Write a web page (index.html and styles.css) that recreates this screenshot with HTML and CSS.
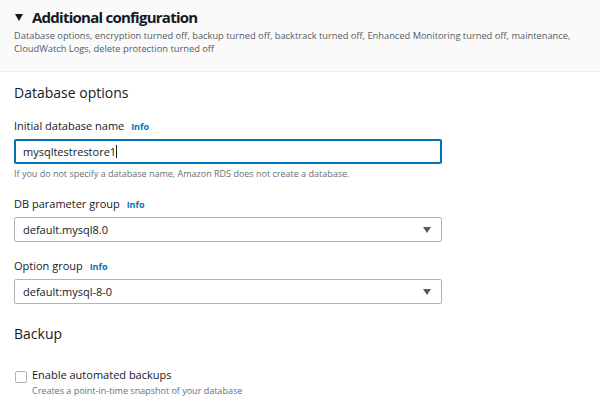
FILE: index.html
```html
<!DOCTYPE html>
<html lang="en">
  <head>
    <meta charset="UTF-8" />
    <meta name="viewport" content="width=device-width, initial-scale=1.0" />
    <title>Additional configuration</title>
    <link rel="stylesheet" href="styles.css">
  </head>
  <body>
    <div class="expander">
      <h1 class="expander-title"><span class="caret"></span>Additional configuration</h1>
      <p class="expander-desc">
        Database options, encryption turned off, backup turned off, backtrack turned off, Enhanced Monitoring turned off, maintenance, CloudWatch Logs, delete protection turned off
      </p>
    </div>

    <div class="section">
      <h2>Database options</h2>

      <div class="field">
        <label class="label">Initial database name <a href="#" class="info">Info</a></label>
        <div class="input focused">mysqltestrestore1<span class="cursor"></span></div>
        <p class="hint">If you do not specify a database name, Amazon RDS does not create a database.</p>
      </div>

      <div class="field">
        <label class="label">DB parameter group <a href="#" class="info">Info</a></label>
        <div class="input select">default.mysql8.0<span class="arrow"></span></div>
      </div>

      <div class="field">
        <label class="label">Option group <a href="#" class="info">Info</a></label>
        <div class="input select">default:mysql-8-0<span class="arrow"></span></div>
      </div>

      <h2 class="backup">Backup</h2>

      <div class="check">
        <span class="box"></span>
        <div>
          <div class="check-label">Enable automated backups</div>
          <p class="hint">Creates a point-in-time snapshot of your database</p>
        </div>
      </div>
    </div>
  </body>
</html>
```

FILE: styles.css
```css
body {
  margin: 0;
  font-family: "Open Sans", "Noto Sans", sans-serif;
  color: #16191f;
  background-color: white;
}
.expander {
  background-color: #fafafa;
  border-bottom: 1px solid #eaeded;
  padding: 7px 14px 0;
  height: 64px;
}
.expander-title {
  margin: 0;
  font-size: 15px;
  font-weight: bold;
  letter-spacing: -0.75px;
  display: flex;
  align-items: center;
  line-height: 20px;
}
.caret {
  width: 0;
  height: 0;
  border-left: 4px solid transparent;
  border-right: 4px solid transparent;
  border-top: 7px solid #16191f;
  margin: 0 9px 0 1px;
}
.expander-desc {
  margin: 2px 0 0;
  font-size: 9.3px;
  line-height: 13px;
  color: #545b64;
  max-width: 565px;
}
.section {
  padding: 0 14px;
}
h2 {
  margin: 11px 0 0;
  font-size: 14px;
  font-weight: normal;
  line-height: 20px;
}
.field {
  margin-top: 15px;
}
.field + .field {
  margin-top: 16px;
}
.label {
  display: block;
  font-size: 11px;
  line-height: 16px;
  margin-bottom: 4px;
}
.info {
  color: #0073bb;
  font-weight: bold;
  font-size: 9px;
  text-decoration: none;
  margin-left: 4px;
}
.input {
  box-sizing: border-box;
  width: 428px;
  height: 25px;
  border: 1px solid #aab7b8;
  border-radius: 2px;
  padding: 0 8px;
  font-size: 11px;
  line-height: 23px;
  display: flex;
  align-items: center;
}
.input.focused {
  border: 2px solid #0073bb;
  padding: 0 7px;
}
.cursor {
  display: inline-block;
  width: 1px;
  height: 13px;
  background-color: #16191f;
}
.select {
  justify-content: space-between;
  padding-right: 10px;
}
.arrow {
  width: 0;
  height: 0;
  border-left: 4px solid transparent;
  border-right: 4px solid transparent;
  border-top: 6px solid #545b64;
}
.hint {
  margin: 3px 0 1px;
  font-size: 9px;
  line-height: 13px;
  color: #687078;
}
.backup {
  margin-top: 20px;
}
.check {
  display: flex;
  align-items: flex-start;
  margin-top: 23px;
}
.box {
  box-sizing: border-box;
  width: 12px;
  height: 12px;
  border: 1px solid #aab7b8;
  border-radius: 2px;
  margin: 4px 5px 0 1px;
  background-color: white;
}
.check-label {
  font-size: 11px;
  line-height: 16px;
}
.check .hint {
  margin-top: 1px;
}
```
